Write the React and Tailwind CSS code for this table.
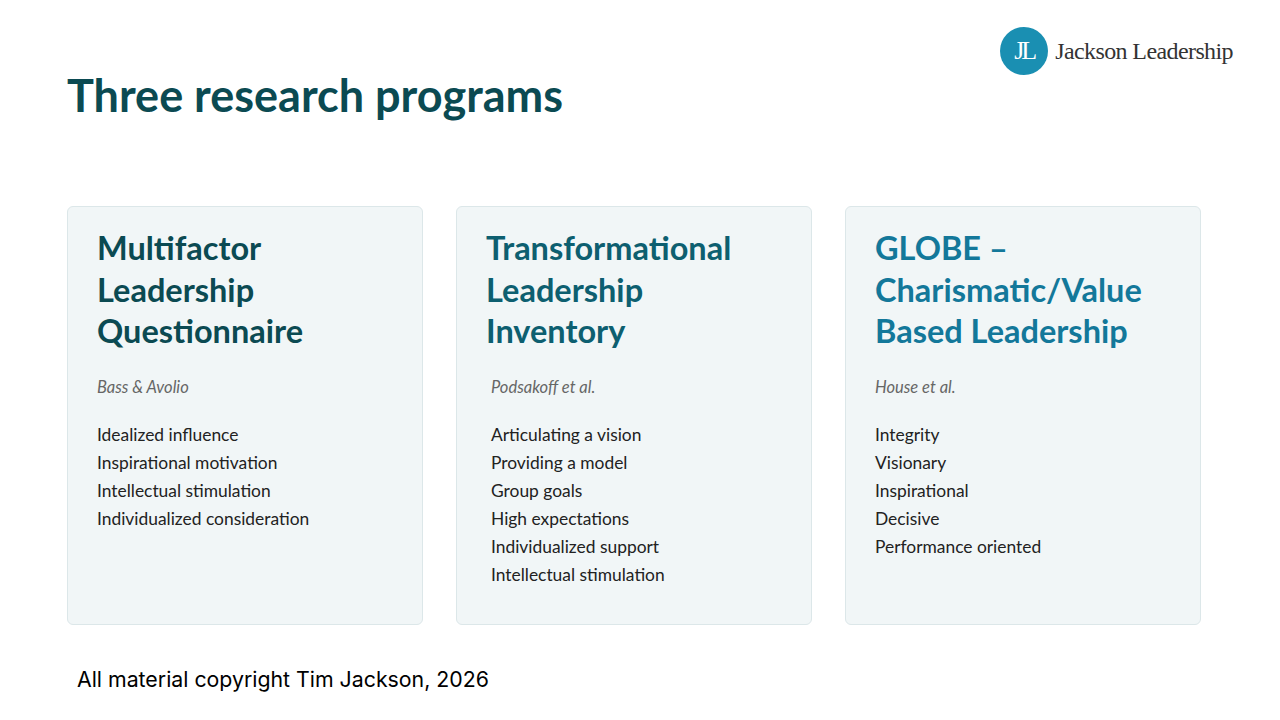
import React from 'react'

const programs = [
  {
    title: ['Multifactor', 'Leadership', 'Questionnaire'],
    color: 'text-[#0b4a52]',
    author: 'Bass & Avolio',
    indent: 'pl-0',
    items: ['Idealized influence', 'Inspirational motivation', 'Intellectual stimulation', 'Individualized consideration'],
  },
  {
    title: ['Transformational', 'Leadership', 'Inventory'],
    color: 'text-[#0d5f70]',
    author: 'Podsakoff et al.',
    indent: 'pl-[5px]',
    items: ['Articulating a vision', 'Providing a model', 'Group goals', 'High expectations', 'Individualized support', 'Intellectual stimulation'],
  },
  {
    title: ['GLOBE –', 'Charismatic/Value', 'Based Leadership'],
    color: 'text-[#13789a]',
    author: 'House et al.',
    indent: 'pl-0',
    items: ['Integrity', 'Visionary', 'Inspirational', 'Decisive', 'Performance oriented'],
  },
]

function Logo() {
  return (
    <div className="flex items-center gap-[7px]">
      <div className="w-[48px] h-[48px] rounded-full bg-[#1a8fb2] flex items-center justify-center">
        <span className="text-white text-[26px] leading-none tracking-[-3px] font-['Liberation_Serif',serif]">JL</span>
      </div>
      <span className="text-[#333] text-[24px] tracking-[-0.6px] font-['Liberation_Serif',serif]">Jackson Leadership</span>
    </div>
  )
}

function Card({ p }) {
  return (
    <div className="w-[356px] h-[419px] bg-[#f1f6f7] border border-[#dce7e9] rounded-[6px] pt-[20px] px-[29px]">
      <h2 className={`${p.color} text-[32.5px] font-bold leading-[41.5px]`}>
        {p.title.map((t) => (
          <div key={t}>{t}</div>
        ))}
      </h2>
      <div className={p.indent}>
        <p className="mt-[23px] text-[16.5px] italic text-[#666]">{p.author}</p>
        <ul className="mt-[22px] text-[17.4px] leading-[28px] text-[#222]">
          {p.items.map((i) => (
            <li key={i}>{i}</li>
          ))}
        </ul>
      </div>
    </div>
  )
}

export default function App() {
  return (
    <div className="w-[1280px] h-[720px] bg-white font-['Lato',sans-serif] flex flex-col">
      <div className="flex justify-between items-start pt-[27px] pl-[67px] pr-[47px]">
        <h1 className="mt-[46px] text-[45px] font-bold text-[#0b4a52] leading-none">Three research programs</h1>
        <Logo />
      </div>
      <div className="flex gap-[33px] pl-[67px] mt-[88px]">
        {programs.map((p) => (
          <Card key={p.author} p={p} />
        ))}
      </div>
      <p className="pl-[77px] mt-[39px] text-[21.3px] text-black font-['Inter',sans-serif]">All material copyright Tim Jackson, 2026</p>
    </div>
  )
}
